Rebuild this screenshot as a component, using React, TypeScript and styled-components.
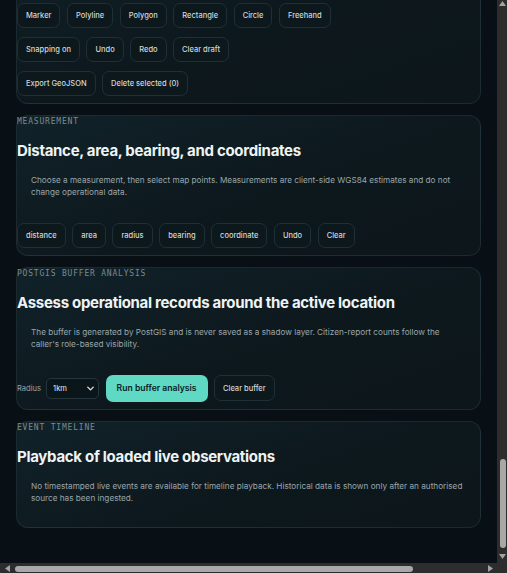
import { useLayoutEffect, useRef } from 'react';
import styled, { createGlobalStyle } from 'styled-components';
import { ChevronDown } from 'lucide-react';

const GlobalStyle = createGlobalStyle`
  html, body {
    margin: 0;
    padding: 0;
    background: #091015;
    overflow: hidden;
  }
  body {
    font-family: Inter, 'Noto Sans', sans-serif;
  }
  * {
    box-sizing: border-box;
  }
`;

// window frame: scrolled panel plus its two scrollbars and the corner
const Frame = styled.div`
  display: grid;
  grid-template-columns: 1fr 10px;
  grid-template-rows: 1fr 10px;
  width: 100vw;
  height: 100vh;
`;

const Scroller = styled.div`
  overflow: hidden;
  background: #091015;
`;

const Track = styled.div<{ $axis: 'x' | 'y' }>`
  display: flex;
  flex-direction: ${({ $axis }) => ($axis === 'y' ? 'column' : 'row')};
  background: #2d2d2d;
`;

const Corner = styled.div`
  background: #2d2d2d;
`;

const StepButton = styled.div<{ $axis: 'x' | 'y'; $top?: boolean }>`
  flex: none;
  display: flex;
  justify-content: center;
  align-items: ${({ $top }) => ($top ? 'flex-start' : 'center')};
  width: ${({ $axis }) => ($axis === 'y' ? '10px' : '14px')};
  height: ${({ $axis }) => ($axis === 'y' ? '14px' : '10px')};
  padding-top: ${({ $top }) => ($top ? '1px' : '0')};
  color: #a3a3a3;
`;

const Rail = styled.div<{ $axis: 'x' | 'y' }>`
  flex: 1;
  display: flex;
  flex-direction: ${({ $axis }) => ($axis === 'y' ? 'column' : 'row')};
  justify-content: ${({ $axis }) => ($axis === 'y' ? 'flex-end' : 'flex-start')};
`;

const Thumb = styled.div<{ $axis: 'x' | 'y'; $size: number }>`
  border-radius: 3px;
  background: #a8a8a8;
  ${({ $axis, $size }) =>
    $axis === 'y'
      ? `width: 6px; height: ${$size}px; margin: 0 0 1px 3px;`
      : `height: 6px; width: ${$size}px; margin: 3px 0 0 1px;`}
`;

const Page = styled.main`
  display: flex;
  flex-direction: column;
  gap: 11px;
  padding: 16px 16px 35px;
`;

const Card = styled.section`
  border: 1px solid rgba(128, 170, 180, 0.13);
  border-radius: 12px;
  background: linear-gradient(160deg, #11222a 0%, #0d181d 55%, #0c161b 100%);
  padding: 0 0 7px;
`;

const Eyebrow = styled.div`
  font-family: 'DejaVu Sans Mono', 'Liberation Mono', monospace;
  font-size: 8px;
  line-height: 11px;
  letter-spacing: 0.8px;
  text-transform: uppercase;
  color: #7c8b8f;
`;

const Title = styled.h2`
  margin: 14px 0 0;
  font-size: 15px;
  line-height: 20px;
  font-weight: 700;
  letter-spacing: -0.02em;
  color: #eef3f3;
`;

const Lead = styled.p`
  margin: 13px 12px 16px 14px;
  font-size: 8.2px;
  line-height: 12px;
  color: #9aa6aa;
`;

const Groups = styled.div`
  display: flex;
  flex-direction: column;
  gap: 9px;
  margin-top: 7px;
`;

const Actions = styled.div<{ $flush?: boolean }>`
  display: flex;
  flex-wrap: wrap;
  align-items: center;
  gap: 9px 6.5px;
  margin-top: ${({ $flush }) => ($flush ? '0' : '24.5px')};
`;

const ToolButton = styled.button<{ $tall?: boolean }>`
  height: ${({ $tall }) => ($tall ? '25.5px' : '25px')};
  padding: 0 8px;
  border: 1px solid #1e3036;
  border-radius: 7px;
  background: #0d181d;
  color: #cfd7d9;
  font-family: Inter, 'Noto Sans', sans-serif;
  font-size: 7.5px;
  font-weight: 500;
  cursor: pointer;
`;

const FieldLabel = styled.label`
  font-size: 7.6px;
  color: #98a4a8;
  margin-right: -1.5px;
`;

const SelectWrap = styled.div`
  position: relative;
  display: flex;
  align-items: center;

  svg {
    position: absolute;
    right: 3px;
    pointer-events: none;
    color: #dfe6e7;
  }
`;

const Select = styled.select`
  appearance: none;
  width: 53px;
  height: 21px;
  padding: 0 16px 0 6px;
  border: 1px solid #24363c;
  border-radius: 5px;
  background: #0b161a;
  color: #e6ecec;
  font-family: Inter, 'Noto Sans', sans-serif;
  font-size: 7.6px;
`;

const PrimaryButton = styled.button`
  height: 27px;
  padding: 0 11px;
  border: none;
  border-radius: 7px;
  background: #5fd8c4;
  color: #0b2223;
  font-family: Inter, 'Noto Sans', sans-serif;
  font-size: 8.6px;
  font-weight: 600;
  cursor: pointer;
`;

type Dir = 'up' | 'down' | 'left' | 'right';

const arrowPoints: Record<Dir, string> = {
  up: '3.5,0 7,5 0,5',
  down: '0,0 7,0 3.5,5',
  left: '5,0 5,7 0,3.5',
  right: '0,0 5,3.5 0,7',
};

function Arrow({ dir }: { dir: Dir }) {
  const vertical = dir === 'up' || dir === 'down';
  return (
    <svg width={vertical ? 7 : 5} height={vertical ? 5 : 7} viewBox={vertical ? '0 0 7 5' : '0 0 5 7'}>
      <polygon points={arrowPoints[dir]} fill="currentColor" />
    </svg>
  );
}

const drawTools = ['Marker', 'Polyline', 'Polygon', 'Rectangle', 'Circle', 'Freehand'];
const draftTools = ['Snapping on', 'Undo', 'Redo', 'Clear draft'];
const measureTools = ['distance', 'area', 'radius', 'bearing', 'coordinate', 'Undo', 'Clear'];

export default function App() {
  const scroller = useRef<HTMLDivElement>(null);

  useLayoutEffect(() => {
    const el = scroller.current;
    if (el) el.scrollTop = el.scrollHeight;
  }, []);

  return (
    <>
      <GlobalStyle />
      <Frame>
        <Scroller ref={scroller}>
          <Page>
            <Card>
              <Eyebrow>Drawing tools</Eyebrow>
              <Title>Sketch and edit map geometry</Title>
              <Lead>
                Draw shapes on the map to mark areas of interest. Drafts stay local until they are
                exported.
              </Lead>
              <Groups>
                <Actions $flush>
                  {drawTools.map((t) => (
                    <ToolButton key={t}>{t}</ToolButton>
                  ))}
                </Actions>
                <Actions $flush>
                  {draftTools.map((t) => (
                    <ToolButton key={t}>{t}</ToolButton>
                  ))}
                </Actions>
                <Actions $flush>
                  <ToolButton>Export GeoJSON</ToolButton>
                  <ToolButton>Delete selected (0)</ToolButton>
                </Actions>
              </Groups>
            </Card>

            <Card>
              <Eyebrow>Measurement</Eyebrow>
              <Title>Distance, area, bearing, and coordinates</Title>
              <Lead>
                Choose a measurement, then select map points. Measurements are client-side WGS84
                estimates and do not change operational data.
              </Lead>
              <Actions>
                {measureTools.map((t, i) => (
                  <ToolButton $tall key={t + i}>
                    {t}
                  </ToolButton>
                ))}
              </Actions>
            </Card>

            <Card>
              <Eyebrow>PostGIS buffer analysis</Eyebrow>
              <Title>Assess operational records around the active location</Title>
              <Lead>
                The buffer is generated by PostGIS and is never saved as a shadow layer.
                Citizen-report counts follow the caller's role-based visibility.
              </Lead>
              <Actions>
                <FieldLabel htmlFor="buffer-radius">Radius</FieldLabel>
                <SelectWrap>
                  <Select id="buffer-radius" defaultValue="1km">
                    <option value="500m">500m</option>
                    <option value="1km">1km</option>
                    <option value="5km">5km</option>
                  </Select>
                  <ChevronDown size={11} strokeWidth={3} />
                </SelectWrap>
                <PrimaryButton>Run buffer analysis</PrimaryButton>
                <ToolButton $tall>Clear buffer</ToolButton>
              </Actions>
            </Card>

            <Card>
              <Eyebrow>Event timeline</Eyebrow>
              <Title>Playback of loaded live observations</Title>
              <Lead>
                No timestamped live events are available for timeline playback. Historical data is
                shown only after an authorised source has been ingested.
              </Lead>
            </Card>
          </Page>
        </Scroller>

        <Track $axis="y">
          <StepButton $axis="y" $top>
            <Arrow dir="up" />
          </StepButton>
          <Rail $axis="y">
            <Thumb $axis="y" $size={89} />
          </Rail>
          <StepButton $axis="y">
            <Arrow dir="down" />
          </StepButton>
        </Track>

        <Track $axis="x">
          <StepButton $axis="x">
            <Arrow dir="left" />
          </StepButton>
          <Rail $axis="x">
            <Thumb $axis="x" $size={398} />
          </Rail>
          <StepButton $axis="x">
            <Arrow dir="right" />
          </StepButton>
        </Track>
        <Corner />
      </Frame>
    </>
  );
}
